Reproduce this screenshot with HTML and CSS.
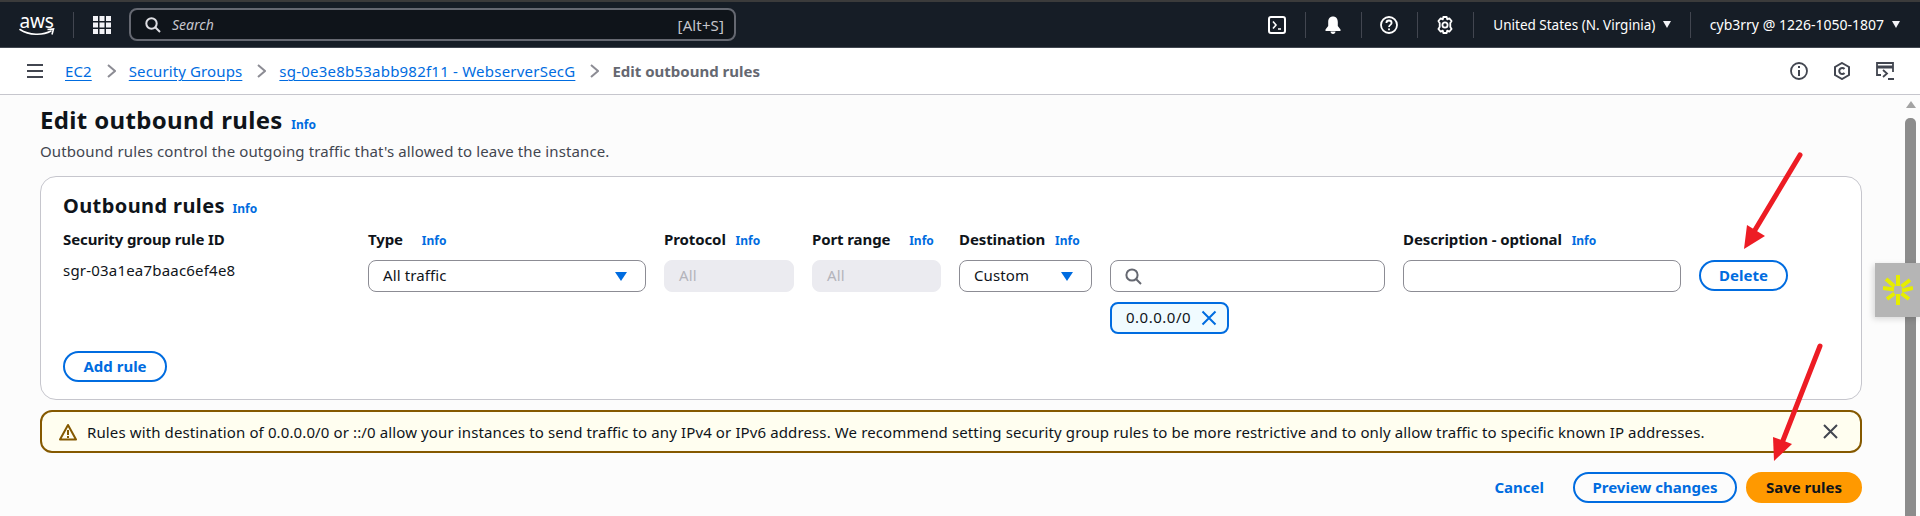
FILE: index.html
```html
<!DOCTYPE html>
<html lang="en">
<head>
    <meta charset="UTF-8">
    <meta name="viewport" content="width=device-width, initial-scale=1.0">
    <title>Edit outbound rules</title>
    <link rel="stylesheet" href="styles.css">
</head>
<body>
    <header class="topbar">
        <div class="aws-logo">
            <span class="aws-word">aws</span>
            <svg class="aws-smile" viewBox="0 0 36 9" width="36" height="9">
                <path d="M1 1.5C10 7.5 24 7.5 32 3" fill="none" stroke="#fff" stroke-width="1.6" stroke-linecap="round"/>
                <path d="M28.5 1.5L34.5 1L33 6.5" fill="none" stroke="#fff" stroke-width="1.6"/>
            </svg>
        </div>
        <span class="top-sep first-sep"></span>
        <svg class="apps-icon" viewBox="0 0 18 18" width="18" height="18" fill="#f3f3f7">
            <rect width="5" height="5"/><rect x="6.5" width="5" height="5"/><rect x="13" width="5" height="5"/>
            <rect y="6.5" width="5" height="5"/><rect x="6.5" y="6.5" width="5" height="5"/><rect x="13" y="6.5" width="5" height="5"/>
            <rect y="13" width="5" height="5"/><rect x="6.5" y="13" width="5" height="5"/><rect x="13" y="13" width="5" height="5"/>
        </svg>
        <div class="global-search">
            <svg viewBox="0 0 16 16" width="16" height="16" fill="none" stroke="#dedee3" stroke-width="2"><circle cx="6.5" cy="6.5" r="5.2"/><path d="M10.5 10.5L15 15"/></svg>
            <span class="search-hint">Search</span>
            <span class="search-key">[Alt+S]</span>
        </div>
        <div class="top-actions">
            <svg class="top-icon" viewBox="0 0 18 18" width="18" height="18" fill="none" stroke="#fff" stroke-width="2"><rect x="1" y="1" width="16" height="16" rx="2"/><path d="M5 5.5L8 9L5 12.5M10 13H13" stroke-width="1.6"/></svg>
            <span class="top-sep"></span>
            <svg class="top-icon" viewBox="0 0 18 18" width="18" height="18" fill="#fff"><path d="M9 0.5C6 0.5 4.2 2.7 4.2 6V10L1.5 13.5V15H16.5V13.5L13.8 10V6C13.8 2.7 12 0.5 9 0.5Z"/><path d="M6.5 15.5H11.5C11.5 17 10.4 18 9 18S6.5 17 6.5 15.5Z"/></svg>
            <span class="top-sep"></span>
            <svg class="top-icon" viewBox="0 0 18 18" width="18" height="18" fill="none" stroke="#fff" stroke-width="1.8"><circle cx="9" cy="9" r="8"/><path d="M6.4 7C6.4 5.4 7.6 4.5 9 4.5S11.6 5.4 11.6 7C11.6 8.8 9 9 9 11"/><path d="M9 12.5V14.2"/></svg>
            <span class="top-sep"></span>
            <svg class="top-icon" viewBox="0 0 18 18" width="18" height="18" fill="none" stroke="#fff" stroke-width="1.8"><path d="M7.3 1H10.7L11.2 3.3L13.3 2.4L15.6 5L14.3 6.9L14.3 11.1L15.6 13L13.3 15.6L11.2 14.7L10.7 17H7.3L6.8 14.7L4.7 15.6L2.4 13L3.7 11.1V6.9L2.4 5L4.7 2.4L6.8 3.3Z" stroke-linejoin="round"/><circle cx="9" cy="9" r="2.6"/></svg>
            <span class="top-sep"></span>
            <span class="top-menu region-menu">United States (N. Virginia)<i class="menu-caret"></i></span>
            <span class="top-sep"></span>
            <span class="top-menu account-menu">cyb3rry @ 1226-1050-1807<i class="menu-caret"></i></span>
        </div>
    </header>

    <nav class="crumbbar">
        <svg class="burger" viewBox="0 0 16 14" width="16" height="14" fill="#424650"><rect width="16" height="2"/><rect y="6" width="16" height="2"/><rect y="12" width="16" height="2"/></svg>
        <a class="crumb" href="#">EC2</a>
        <svg class="chevron" viewBox="0 0 9 14" width="9" height="14" fill="none" stroke="#8c8c94" stroke-width="2"><path d="M1 1L8 7L1 13"/></svg>
        <a class="crumb" href="#">Security Groups</a>
        <svg class="chevron" viewBox="0 0 9 14" width="9" height="14" fill="none" stroke="#8c8c94" stroke-width="2"><path d="M1 1L8 7L1 13"/></svg>
        <a class="crumb crumb-sg" href="#">sg-0e3e8b53abb982f11 - WebserverSecG</a>
        <svg class="chevron" viewBox="0 0 9 14" width="9" height="14" fill="none" stroke="#8c8c94" stroke-width="2"><path d="M1 1L8 7L1 13"/></svg>
        <span class="crumb-current">Edit outbound rules</span>
        <div class="crumb-tools">
            <svg viewBox="0 0 18 18" width="18" height="18" fill="none" stroke="#424650" stroke-width="1.8"><circle cx="9" cy="9" r="8"/><path d="M9 8V14M9 4V6" stroke-width="2"/></svg>
            <svg viewBox="0 0 18 18" width="18" height="18" fill="none" stroke="#424650" stroke-width="2"><path d="M9 1L16 5V13L9 17L2 13V5Z"/><path d="M11.5 7A3 3 0 1 0 11.5 11"/></svg>
            <svg viewBox="0 0 18 18" width="18" height="18" fill="none" stroke="#424650" stroke-width="1.8"><path d="M5 13H1V1H17V10"/><path d="M1 5H17" stroke-width="3"/><path d="M7 8L11 11.5L7 15M12 17H18"/></svg>
        </div>
    </nav>

    <main class="workspace">
        <div class="page">
            <h1 class="page-title">Edit outbound rules <a class="info-link" href="#">Info</a></h1>
            <p class="page-desc">Outbound rules control the outgoing traffic that's allowed to leave the instance.</p>

            <section class="rules-card">
                <h2 class="card-title">Outbound rules <a class="info-link" href="#">Info</a></h2>
                <div class="rule-grid">
                    <div class="col-label">Security group rule ID</div>
                    <div class="col-label">Type <a class="info-link wide" href="#">Info</a></div>
                    <div class="col-label">Protocol <a class="info-link" href="#">Info</a></div>
                    <div class="col-label">Port range <a class="info-link wide" href="#">Info</a></div>
                    <div class="col-label">Destination <a class="info-link" href="#">Info</a></div>
                    <div></div>
                    <div class="col-label">Description - optional <a class="info-link" href="#">Info</a></div>
                    <div></div>

                    <div class="rule-id">sgr-03a1ea7baac6ef4e8</div>
                    <div class="field select">All traffic<i class="select-caret"></i></div>
                    <div class="field disabled">All</div>
                    <div class="field disabled">All</div>
                    <div class="field select">Custom<i class="select-caret"></i></div>
                    <div class="field search-field">
                        <svg viewBox="0 0 17 17" width="17" height="17" fill="none" stroke="#656871" stroke-width="2"><circle cx="7" cy="7" r="5.6"/><path d="M11 11L16 16"/></svg>
                    </div>
                    <div class="field"></div>
                    <button class="btn delete-btn">Delete</button>

                    <div class="token">0.0.0.0/0
                        <svg viewBox="0 0 16 16" width="16" height="16" fill="none" stroke="#006ce0" stroke-width="2"><path d="M1.5 1.5L14.5 14.5M14.5 1.5L1.5 14.5"/></svg>
                    </div>
                </div>
                <button class="btn add-btn">Add rule</button>
            </section>

            <div class="warning">
                <svg viewBox="0 0 18 18" width="18" height="18" fill="none" stroke="#855900" stroke-width="2"><path d="M9 2L17 16.5H1Z" stroke-linejoin="round"/><path d="M9 7V12M9 13V15"/></svg>
                <span class="warning-text">Rules with destination of 0.0.0.0/0 or ::/0 allow your instances to send traffic to any IPv4 or IPv6 address. We recommend setting security group rules to be more restrictive and to only allow traffic to specific known IP addresses.</span>
                <svg class="warning-close" viewBox="0 0 15 15" width="15" height="15" fill="none" stroke="#424650" stroke-width="2"><path d="M1 1L14 14M14 1L1 14"/></svg>
            </div>

            <div class="form-actions">
                <a class="cancel-link" href="#">Cancel</a>
                <button class="btn preview-btn">Preview changes</button>
                <button class="btn save-btn">Save rules</button>
            </div>
        </div>
        <div class="scrollbar">
            <i class="scroll-up"></i>
            <div class="scroll-thumb"></div>
        </div>
    </main>

    <!-- red annotation arrows drawn on top of the screenshot -->
    <svg class="annotations" viewBox="0 0 1920 516" width="1920" height="516">
        <path d="M1800 155L1755 230" stroke="#ed1c24" stroke-width="5" stroke-linecap="round"/>
        <path d="M1744 249L1747 225L1765 236Z" fill="#ed1c24"/>
        <path d="M1820 346L1782 443" stroke="#ed1c24" stroke-width="5" stroke-linecap="round"/>
        <path d="M1774 461L1773 437L1792 444Z" fill="#ed1c24"/>
    </svg>

    <div class="side-widget">
        <svg viewBox="0 0 30 30" width="30" height="30" stroke="#e6ee00" stroke-width="4">
            <path d="M15 0V11M15 19V30M0 13L11 14.5M19 15.5L30 13M3 4L11.5 11.5M18.5 18.5L26 24M27 5L18.5 11.5M11.5 18.5L4 24"/>
        </svg>
    </div>
</body>
</html>
```

FILE: styles.css
```css
* {
    box-sizing: border-box;
}
html, body {
    margin: 0;
    height: 516px;
    overflow: hidden;
}
body {
    position: relative;
    display: flex;
    flex-direction: column;
    font-family: "Noto Sans", Arial, sans-serif;
    font-size: 15px;
    letter-spacing: 0.12px;
    line-height: 20px;
    color: #0f141a;
    background-color: #fcfcfc;
}
a {
    color: #006ce0;
}
button {
    font-family: inherit;
}

/* top bar */
.topbar {
    display: flex;
    align-items: center;
    height: 48px;
    border-top: 2px solid #3b3b3b;
    border-bottom: 1px solid #414750;
    background-color: #161d26;
    padding-left: 18px;
    color: #fff;
    flex-shrink: 0;
}
.aws-logo {
    position: relative;
    width: 37px;
    height: 24px;
    display: flex;
    flex-direction: column;
    align-items: center;
}
.aws-word {
    font-size: 19px;
    line-height: 16px;
    letter-spacing: -0.2px;
}
.aws-smile {
    margin-top: -1px;
}
.top-sep {
    width: 1px;
    height: 26px;
    background-color: #424650;
}
.first-sep {
    margin-left: 18px;
}
.apps-icon {
    margin-left: 19px;
}
.global-search {
    display: flex;
    align-items: center;
    width: 607px;
    height: 33px;
    margin-left: 18px;
    padding: 0 10px 0 14px;
    background-color: #0f141a;
    border: 2px solid #656871;
    border-radius: 8px;
    color: #c6c6cd;
}
.search-hint {
    margin-left: 11px;
    font-size: 14px;
    letter-spacing: 0;
    font-style: italic;
}
.search-key {
    margin-left: auto;
}
.top-actions {
    margin-left: auto;
    display: flex;
    align-items: center;
    gap: 18.5px;
    padding-right: 20px;
}
.top-menu {
    display: flex;
    align-items: center;
    gap: 8px;
    letter-spacing: 0;
    white-space: nowrap;
}
.region-menu {
    margin-left: 1px;
    font-size: 13.5px;
}
.account-menu {
    margin-left: 0.5px;
    font-size: 14px;
    letter-spacing: 0;
}
.menu-caret {
    border-left: 4.5px solid transparent;
    border-right: 4.5px solid transparent;
    border-top: 7px solid #f3f3f7;
}

/* breadcrumbs */
.crumbbar {
    display: flex;
    align-items: center;
    height: 47px;
    padding: 0 26px 0 27px;
    background-color: #fff;
    border-bottom: 1px solid #c6c6cd;
    flex-shrink: 0;
}
.burger {
    margin-right: 22px;
}
.crumb {
    text-decoration: underline;
    text-underline-offset: 3px;
}
.crumb-sg {
    letter-spacing: 0.22px;
}
.chevron {
    margin: 0 13px 0 15px;
}
.crumb-current {
    font-weight: 700;
    letter-spacing: 0;
    color: #656871;
}
.crumb-tools {
    margin-left: auto;
    display: flex;
    gap: 25px;
}

/* page */
.workspace {
    flex: 1;
    display: flex;
    min-height: 0;
}
.page {
    flex: 1;
    padding: 9px 43px 0 40px;
    min-width: 0;
}
.page-title {
    margin: 0;
    font-size: 24px;
    letter-spacing: 0.35px;
    line-height: 32px;
    font-weight: 700;
}
.info-link {
    font-size: 12px;
    font-weight: 700;
    letter-spacing: 0;
    line-height: 1;
    text-decoration: none;
    margin-left: 2px;
}
.page-desc {
    margin: 5px 0 0;
    color: #424650;
}
.rules-card {
    margin-top: 15px;
    height: 224px;
    padding: 17px 22px 0;
    background-color: #fff;
    border: 1px solid #c6c6cd;
    border-radius: 16px;
}
.card-title {
    margin: 0;
    font-size: 20px;
    letter-spacing: 0.4px;
    line-height: 24px;
    font-weight: 700;
}
.rule-grid {
    margin-top: 11px;
    display: grid;
    grid-template-columns: 287px 278px 130px 129px 133px 275px 278px 89px;
    column-gap: 18px;
    row-gap: 11px;
}
.col-label {
    font-weight: 700;
    letter-spacing: -0.1px;
    white-space: nowrap;
}
.col-label .info-link {
    margin-left: 6px;
}
.col-label .info-link.wide {
    margin-left: 15px;
}
.rule-id {
    letter-spacing: 0.2px;
}
.field {
    display: flex;
    align-items: center;
    height: 32px;
    padding: 0 14px 2px;
    border: 1px solid #8c8c94;
    border-radius: 8px;
    background-color: #fff;
}
.select {
    justify-content: space-between;
}
.select-caret {
    border-left: 6px solid transparent;
    border-right: 6px solid transparent;
    border-top: 9px solid #006ce0;
    margin: 2px 4px 0 0;
}
.search-field svg {
    margin-top: 2px;
}
.disabled {
    border-color: #ebebf0;
    background-color: #ebebf0;
    color: #b4b4bb;
}
.token {
    grid-column: 6;
    justify-self: start;
    display: flex;
    align-items: center;
    gap: 10px;
    height: 32px;
    margin-top: -1px;
    padding: 0 10px 2px 14px;
    letter-spacing: 0.5px;
    color: #0f141a;
    background-color: #f0fbff;
    border: 2px solid #006ce0;
    border-radius: 8px;
}
.token svg {
    margin-top: 2px;
}
.btn {
    height: 31px;
    padding: 0 0 2px;
    font-size: 15px;
    font-weight: 700;
    letter-spacing: 0;
    color: #006ce0;
    background-color: #fff;
    border: 2px solid #006ce0;
    border-radius: 20px;
}
.add-btn {
    display: block;
    width: 104px;
    margin-top: 17px;
}
.warning {
    margin-top: 10px;
    display: flex;
    align-items: center;
    height: 43px;
    padding: 0 22px 0 17px;
    background-color: #fffef0;
    border: 2px solid #855900;
    border-radius: 12px;
}
.warning-text {
    margin-left: 10px;
    white-space: nowrap;
}
.warning-close {
    margin-left: auto;
}
.form-actions {
    margin-top: 19px;
    display: flex;
    align-items: center;
}
.cancel-link {
    margin: 0 0 2px auto;
    font-weight: 700;
    letter-spacing: 0;
    text-decoration: none;
}
.preview-btn {
    width: 164px;
    margin-left: 29px;
    background-color: transparent;
}
.save-btn {
    width: 116px;
    margin-left: 9px;
    color: #0f141a;
    background-color: #ff9900;
    border-color: #ff9900;
}
.scrollbar {
    width: 15px;
    flex-shrink: 0;
}
.scroll-up {
    display: block;
    width: 0;
    margin: 6px 0 0 1px;
    border-left: 5px solid transparent;
    border-right: 5px solid transparent;
    border-bottom: 7px solid #a3a3a3;
}
.scroll-thumb {
    width: 11px;
    height: 420px;
    margin-top: 10px;
    border-radius: 5px 5px 0 0;
    background-color: #8c8c8c;
}

/* overlays */
.annotations {
    position: absolute;
    top: 0;
    left: 0;
    pointer-events: none;
}
.side-widget {
    position: absolute;
    top: 263px;
    right: 0;
    width: 45px;
    height: 54px;
    display: flex;
    align-items: center;
    justify-content: center;
    background-color: #b5b5b5;
    box-shadow: -2px 2px 6px rgba(0, 0, 0, 0.15);
}
```
